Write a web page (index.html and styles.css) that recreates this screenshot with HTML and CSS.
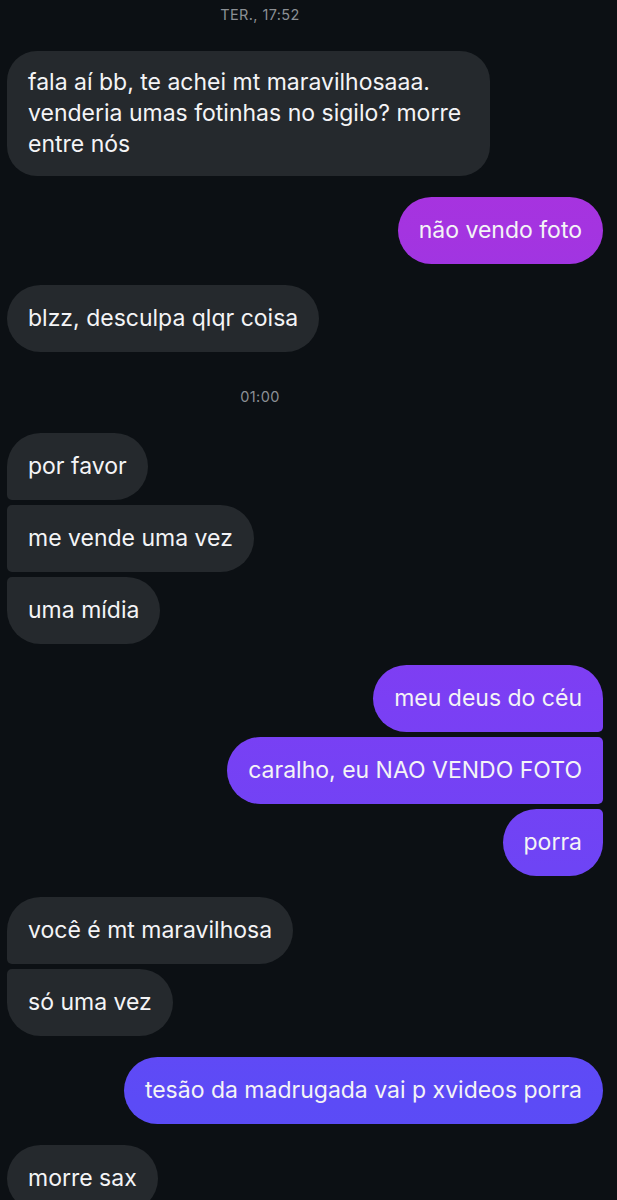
FILE: index.html
```html
<!DOCTYPE html>
<html lang="pt-BR">
<head>
    <meta charset="UTF-8">
    <meta name="viewport" content="width=device-width, initial-scale=1.0">
    <title>Mensagens</title>
    <link rel="stylesheet" href="styles.css">
</head>
<body>
    <div class="thread">
        <div class="stamp">TER., 17:52</div>

        <div class="group in">
            <div class="bubble long">fala aí bb, te achei mt maravilhosaaa. venderia umas fotinhas no sigilo? morre entre nós</div>
        </div>

        <div class="group out">
            <div class="bubble">não vendo foto</div>
        </div>

        <div class="group in">
            <div class="bubble">blzz, desculpa qlqr coisa</div>
        </div>

        <div class="stamp">01:00</div>

        <div class="group in">
            <div class="bubble">por favor</div>
            <div class="bubble">me vende uma vez</div>
            <div class="bubble">uma mídia</div>
        </div>

        <div class="group out">
            <div class="bubble">meu deus do céu</div>
            <div class="bubble">caralho, eu NAO VENDO FOTO</div>
            <div class="bubble">porra</div>
        </div>

        <div class="group in">
            <div class="bubble">você é mt maravilhosa</div>
            <div class="bubble">só uma vez</div>
        </div>

        <div class="group out">
            <div class="bubble">tesão da madrugada vai p xvideos porra</div>
        </div>

        <div class="group in">
            <div class="bubble">morre sax</div>
        </div>
    </div>
</body>
</html>
```

FILE: styles.css
```css
body {
    margin: 0;
    background: #0c1014;
    color: #f4f4f6;
    font-family: "Inter", "Noto Sans", sans-serif;
    overflow: hidden;
}

.thread {
    display: flex;
    flex-direction: column;
    gap: 21px;
    padding: 4px 14px 0 7px;
}

.stamp {
    text-align: center;
    padding-right: 90px;
    font-size: 14.5px;
    line-height: 22px;
    letter-spacing: 0.4px;
    color: #8b8f94;
    margin-bottom: 4px;
}

.stamp:not(:first-child) {
    margin-top: 13px;
}

.group {
    display: flex;
    flex-direction: column;
    gap: 5px;
}

.group.in {
    align-items: flex-start;
}

.group.out {
    align-items: flex-end;
}

.bubble {
    font-size: 23px;
    line-height: 33px;
    padding: 17px 21px;
    border-radius: 34px;
    max-width: 441px;
}

.bubble.long {
    line-height: 31px;
    padding: 16px 21px;
    border-radius: 30px;
}

.in .bubble {
    background: #25292d;
}

.out .bubble {
    background: linear-gradient(to bottom, #b42fdc 0px, #a434e0 230px, #7b3ff4 700px, #5c4bf6 1100px, #584df6 1200px);
    background-attachment: fixed;
}

/* grouped corners */
.in .bubble:not(:last-child) {
    border-bottom-left-radius: 5px;
}

.in .bubble:not(:first-child) {
    border-top-left-radius: 5px;
}

.out .bubble:not(:last-child) {
    border-bottom-right-radius: 5px;
}

.out .bubble:not(:first-child) {
    border-top-right-radius: 5px;
}
```
